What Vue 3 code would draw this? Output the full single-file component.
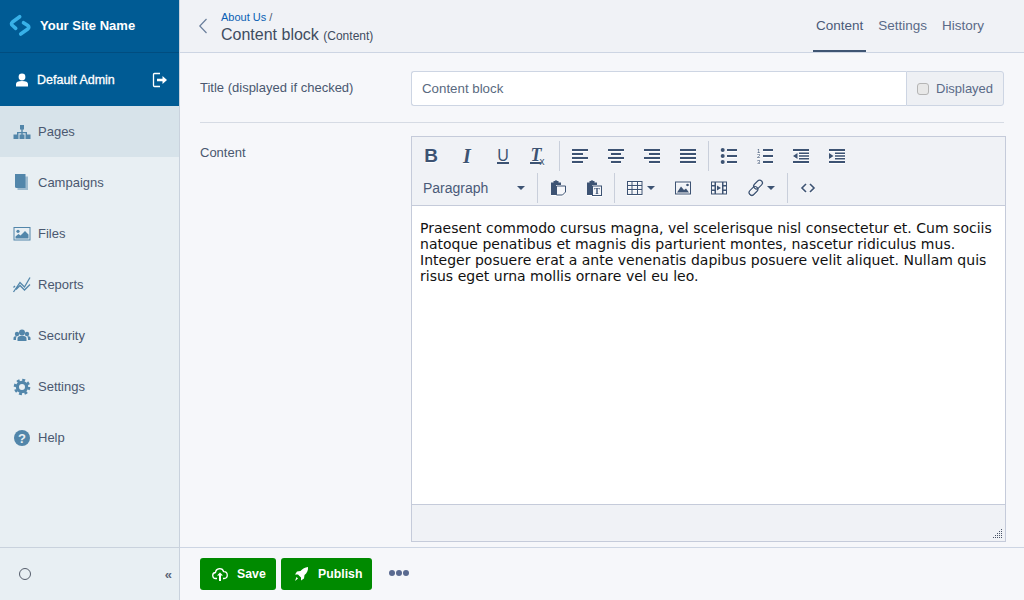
<script setup>
const nav = [
  { label: 'Pages', active: true, svg: `<path d="M8 0h4v4.500H8zM9.300 4.500h1.400V7H15v2.500h-1.400V8.300H10.700v1.200H9.300V8.300H6.400v1.200H5V7h4.300zM1.500 9.500h5v4.500h-5zM7.500 9.500h5v4.500h-5zM13.500 9.500h5v4.500h-5z" transform="translate(0 3)"/>` },
  { label: 'Campaigns', svg: `<path d="M5.500 3.500H16V17H5.500z" opacity=".5"/><path d="M3 1h10.500v14H4.500A1.500 1.500 0 0 1 3 13.500z"/>` },
  { label: 'Files', svg: `<path fill-rule="evenodd" d="M1.500 3h17v13.500h-17zM2.500 4v11.500h15V4z"/><circle cx="6" cy="7.300" r="1.600"/><path d="M3.500 14.500V12.500l3-2.500 2 1.500 4.500-4.500 3.500 3.500v4z"/>` },
  { label: 'Reports', svg: `<path fill="none" stroke="currentColor" stroke-width="1.300" d="M1.500 17 8 7.500l4.500 4.500L18 2.500M1.500 12.500 3 11M4 14.500l4-4 4.500 4.500 5.500-5.500"/>` },
  { label: 'Security', svg: `<circle cx="10" cy="6.500" r="3"/><circle cx="5" cy="8" r="2.200"/><circle cx="15" cy="8" r="2.200"/><path d="M5.500 15v-2.500c0-2 1.500-2.800 4.500-2.800s4.500.8 4.500 2.800V15zM1.500 14v-2c0-1.300.8-1.800 2.800-1.800.3 0 .5 0 .6.100-.6.700-.9 1.500-.9 2.300V14zM18.500 14v-2c0-1.300-.8-1.800-2.800-1.800-.3 0-.5 0-.6.100.6.700.9 1.500.9 2.300V14z"/>` },
  { label: 'Settings', svg: `<circle cx="10" cy="10" r="4.600" fill="none" stroke="currentColor" stroke-width="3.200"/><circle cx="10" cy="10" r="7" fill="none" stroke="currentColor" stroke-width="2.600" stroke-dasharray="2.900 2.600"/>` },
  { label: 'Help', svg: `<circle cx="10" cy="10" r="8"/><text x="10" y="14.500" text-anchor="middle" font-family="Liberation Sans" font-weight="700" font-size="13" fill="#e8eff3">?</text>` },
]
const lines = (rows) => rows.map(([x, y, w]) => `M${x} ${y}h${w}v2h-${w}z`).join('')
const indentBars = 'M2 3h16v2H2zM8 6.500h10V8H8zM8 9.300h10v1.500H8zM8 12h10v1.500H8zM2 15h16v2H2z'
const align = {
  left: lines([[2, 3, 16], [2, 7, 11], [2, 11, 16], [2, 15, 11]]),
  center: lines([[2, 3, 16], [5, 7, 10], [2, 11, 16], [5, 15, 10]]),
  right: lines([[2, 3, 16], [7, 7, 11], [2, 11, 16], [7, 15, 11]]),
  justify: lines([[2, 3, 16], [2, 7, 16], [2, 11, 16], [2, 15, 16]]),
}
const row1b = [
  { svg: `<path d="${align.left}"/>` },
  { svg: `<path d="${align.center}"/>` },
  { svg: `<path d="${align.right}"/>` },
  { svg: `<path d="${align.justify}"/>` },
]
const row1c = [
  { svg: `<circle cx="3.700" cy="4" r="2"/><circle cx="3.700" cy="10" r="2"/><circle cx="3.700" cy="16" r="2"/><path d="${lines([[8, 3, 10], [8, 9, 10], [8, 15, 10]])}"/>` },
  { svg: `<text x="2" y="6.500" font-size="6" font-family="Liberation Sans">1</text><text x="2" y="12" font-size="6" font-family="Liberation Sans">2</text><text x="2" y="17.500" font-size="6" font-family="Liberation Sans">3</text><path d="${lines([[8, 3, 10], [8, 9, 10], [8, 15, 10]])}"/>` },
  { svg: `<path d="${indentBars}M6.500 7v6L2 10z"/>` },
  { svg: `<path d="${indentBars}M2 7v6l4.500-3z"/>` },
]
const clip = `M3 4.500h2.500V3h1.200a1.500 1.500 0 0 1 2.600 0h1.200v1.500H13V7H8v10H3z`
const tableSvg = `<path fill-rule="evenodd" d="M1 3h15.500v14H1zM2 4v3h3.500V4zM6.500 4v3H11V4zM12 4v3h3.500V4zM2 8v3h3.500V8zM6.500 8v3H11V8zM12 8v3h3.500V8zM2 12v4h3.500v-4zM6.500 12v4H11v-4zM12 12v4h3.500v-4z"/>`
const imgSvg = `<path fill-rule="evenodd" d="M2 3.500h16v13H2zM3 4.500v11h14v-11z"/><circle cx="14.500" cy="7" r="1.300"/><path d="M4 14.500l4-6 3 3.500 2-1.500 3 4z"/>`
const mediaSvg = `<path fill-rule="evenodd" d="M2 3.500h16v13H2zM3 4.500v2.500h2.500V4.500zM14.500 4.500v2.500H17V4.500zM3 8.500v3h2.500v-3zM14.500 8.500v3H17v-3zM3 13v2.500h2.500V13zM14.500 13v2.500H17V13zM7 4.500v11h6v-11z"/><path d="M8 7.500l4 2.500-4 2.500z"/>`
const linkSvg = `<g fill="none" stroke="currentColor" stroke-width="1.200" stroke-linecap="round"><rect x="9.300" y="1.500" width="5.500" height="10" rx="2.700" transform="rotate(45 12 6.500)"/><rect x="4.700" y="8" width="5.500" height="10" rx="2.700" transform="rotate(45 7.500 13)"/></g>`
const codeSvg = `<path fill="none" stroke="currentColor" stroke-width="1.600" d="M8 6l-4 4 4 4M12 6l4 4-4 4"/>`
</script>

<template>
  <div class="app">
    <aside class="side">
      <div class="brand">
        <svg class="logo" width="26" height="26" viewBox="0 0 26 26">
          <path fill="none" stroke="#38b1e8" stroke-width="3.600" stroke-linecap="round" stroke-linejoin="round" d="M12.700 3.700 5.500 9Q3.500 10.800 5.500 12.500L8.700 15.300M13.700 21 20.800 16Q22.800 14 20.800 12.500L16.500 9.700"/>
        </svg>
        <span class="site">Your Site Name</span>
      </div>
      <div class="user">
        <svg class="uico" width="14" height="14" viewBox="0 0 14 14">
          <circle cx="7" cy="4" r="3.400" fill="#fff"/>
          <path d="M1 13.500V11c0-2 2-3 6-3s6 1 6 3v2.500z" fill="#fff"/>
        </svg>
        <span class="uname">Default Admin</span>
        <svg class="logout" width="16" height="16" viewBox="0 0 16 16">
          <path fill="none" stroke="#fff" stroke-width="1.300" d="M8 1.500H2.500a1 1 0 0 0-1 1v11a1 1 0 0 0 1 1H8"/>
          <path fill="#fff" d="M5 6.800h5.500V4l4.500 4-4.500 4V9.200H5z"/>
        </svg>
      </div>
      <nav class="nav">
        <a v-for="item in nav" :key="item.label" class="nav-item" :class="{ active: item.active }">
          <svg class="nav-ico" width="20" height="20" viewBox="0 0 20 20" v-html="item.svg"></svg>
          <span>{{ item.label }}</span>
        </a>
      </nav>
      <div class="side-foot">
        <span class="ring"></span>
        <span class="collapse">«</span>
      </div>
    </aside>

    <main class="main">
      <header class="top">
        <svg class="back" width="10" height="18" viewBox="0 0 10 18">
          <path fill="none" stroke="#6a7f9c" stroke-width="1.200" d="M8.500 2 1.800 9l6.700 7"/>
        </svg>
        <div class="crumbs">
          <div class="crumb"><a>About Us</a> /</div>
          <div class="title">Content block <small>(Content)</small></div>
        </div>
        <div class="tabs">
          <a class="tab on">Content</a>
          <a class="tab">Settings</a>
          <a class="tab">History</a>
        </div>
      </header>

      <section class="form">
        <div class="row first">
          <label class="lab">Title (displayed if checked)</label>
          <div class="group">
            <div class="input">Content block</div>
            <div class="addon"><span class="check"></span>Displayed</div>
          </div>
        </div>
        <hr class="rule" />
        <div class="row grow">
          <label class="lab lab2">Content</label>
          <div class="editor">
            <div class="toolbar">
              <div class="tbrow">
                <div class="tg">
                  <button class="b"><span class="g-b">B</span></button>
                  <button class="b"><span class="g-i">I</span></button>
                  <button class="b"><span class="g-u">U</span></button>
                  <button class="b"><span class="g-t">T<sub>x</sub></span></button>
                </div>
                <div class="tg sep">
                  <button v-for="(i, n) in row1b" :key="n" class="b"><svg width="20" height="20" viewBox="0 0 20 20" v-html="i.svg"></svg></button>
                </div>
                <div class="tg sep">
                  <button v-for="(i, n) in row1c" :key="n" class="b"><svg width="20" height="20" viewBox="0 0 20 20" v-html="i.svg"></svg></button>
                </div>
              </div>
              <div class="tbrow">
                <div class="fmt"><span>Paragraph</span><i class="caret"></i></div>
                <div class="tg sep">
                  <button class="b">
                    <svg width="20" height="20" viewBox="0 0 20 20">
                      <path :d="clip" />
                      <path d="M8.500 8h9v6l-3 3h-6z" fill="#f6f7fa" stroke="currentColor" />
                    </svg>
                  </button>
                  <button class="b">
                    <svg width="20" height="20" viewBox="0 0 20 20">
                      <path :d="clip" />
                      <rect x="8.500" y="8" width="9" height="9.500" fill="#f6f7fa" stroke="currentColor" />
                      <text x="13" y="16" text-anchor="middle" font-family="Liberation Serif" font-weight="700" font-size="9">T</text>
                    </svg>
                  </button>
                </div>
                <div class="tg sep">
                  <button class="b wide"><svg width="20" height="20" viewBox="0 0 20 20" v-html="tableSvg"></svg><i class="caret small"></i></button>
                  <button class="b"><svg width="20" height="20" viewBox="0 0 20 20" v-html="imgSvg"></svg></button>
                  <button class="b"><svg width="20" height="20" viewBox="0 0 20 20" v-html="mediaSvg"></svg></button>
                  <button class="b wide"><svg width="20" height="20" viewBox="0 0 20 20" v-html="linkSvg"></svg><i class="caret small"></i></button>
                </div>
                <div class="tg sep">
                  <button class="b"><svg width="20" height="20" viewBox="0 0 20 20" v-html="codeSvg"></svg></button>
                </div>
              </div>
            </div>
            <div class="body">Praesent commodo cursus magna, vel scelerisque nisl consectetur et. Cum sociis natoque penatibus et magnis dis parturient montes, nascetur ridiculus mus. Integer posuere erat a ante venenatis dapibus posuere velit aliquet. Nullam quis risus eget urna mollis ornare vel eu leo.</div>
            <div class="status">
              <svg width="10" height="10" viewBox="0 0 10 10">
                <path fill="#4a5568" d="M8 0h1v1H8zM8 2h1v1H8zM6 2h1v1H6zM8 4h1v1H8zM6 4h1v1H6zM4 4h1v1H4zM8 6h1v1H8zM6 6h1v1H6zM4 6h1v1H4zM2 6h1v1H2zM8 8h1v1H8zM6 8h1v1H6zM4 8h1v1H4zM2 8h1v1H2zM0 8h1v1H0z" />
              </svg>
            </div>
          </div>
        </div>
      </section>

      <footer class="foot">
        <button class="go">
          <svg width="16" height="16" viewBox="0 0 16 16">
            <path fill="none" stroke="#fff" stroke-width="1.300" d="M5 12.500H4a3 3 0 0 1-.5-6 4.200 4.200 0 0 1 8.200-.8 3.400 3.400 0 0 1 .3 6.800h-1" />
            <path fill="#fff" d="M8 6.500l3 3H9v5.500H7V9.500H5z" />
          </svg>
          Save
        </button>
        <button class="go pub">
          <svg width="16" height="16" viewBox="0 0 16 16">
            <path fill="#fff" d="M15 1c.3 3.500-1 6-3.500 8l-.5 3.500-3 2v-3l-3-3H2l2-3 3.500-.5C9.500 3 12 1.200 15 1zM3.500 11l1.500 1.500L2 15z" />
          </svg>
          Publish
        </button>
        <span class="dots"><i></i><i></i><i></i></span>
      </footer>
    </main>
  </div>
</template>

<style scoped>
.app { display: flex; width: 1024px; height: 600px; overflow: hidden; font-family: "Liberation Sans", Arial, sans-serif; font-size: 13px; color: #4a5870; background: #f6f7fa; }

.side { width: 180px; flex: none; display: flex; flex-direction: column; background: #e8eff3; border-right: 1px solid #c9d2dd; box-sizing: border-box; }
.brand { height: 53px; box-sizing: border-box; display: flex; align-items: center; padding-left: 7px; background: #005b94; border-bottom: 1px solid #004d80; }
.logo { flex: none; }
.site { margin-left: 7px; color: #fff; font-weight: 700; font-size: 13px; margin-bottom: 2px; }
.user { height: 53px; display: flex; align-items: center; padding: 0 11px 0 15px; background: #005b94; color: #fff; }
.uname { margin-left: 8px; font-size: 12.500px; -webkit-text-stroke: .3px #fff; flex: 1; }
.nav { flex: 1; display: flex; flex-direction: column; }
.nav-item { height: 51px; display: flex; align-items: center; padding-left: 12px; color: #4a5870; }
.nav-item.active { background: #d7e3ea; }
.nav-ico { fill: #5286aa; color: #5286aa; flex: none; margin-right: 6px; }
.side-foot { height: 53px; box-sizing: border-box; border-top: 1px solid #c9d2dd; display: flex; align-items: center; justify-content: space-between; padding: 0 7px 0 19px; }
.ring { width: 12px; height: 12px; box-sizing: border-box; border: 1.500px solid #555d6b; border-radius: 50%; }
.collapse { font-size: 13px; font-weight: 700; color: #5a6578; }

.main { flex: 1; min-width: 0; display: flex; flex-direction: column; }
.top { height: 53px; flex: none; box-sizing: border-box; display: flex; align-items: center; padding: 0 37px 0 18px; background: #f0f2f6; border-bottom: 1px solid #cdd5e3; }
.back { flex: none; margin-right: 13px; }
.crumbs { flex: 1; padding-top: 3px; }
.crumb { font-size: 11px; line-height: 14px; color: #4a5870; }
.crumb a { color: #0a5fb4; }
.title { font-size: 16px; line-height: 20px; color: #3f4c60; margin-top: 1px; }
.title small { font-size: 12px; }
.tabs { display: flex; align-self: stretch; gap: 9px; }
.tab { position: relative; padding: 0 3px 2px; box-sizing: border-box; display: flex; align-items: center; color: #5a6a88; height: 52px; font-size: 13.500px; }
.tab.on { color: #4a5a78; }
.tab.on::after { content: ""; position: absolute; left: 0; right: 0; bottom: 0; height: 2px; background: #3f5573; }

.form { flex: 1; min-height: 0; display: flex; flex-direction: column; padding: 18px 18px 5px 20px; }
.row { display: flex; }
.grow { flex: 1; min-height: 0; }
.lab { width: 211px; flex: none; color: #4a5870; line-height: 33px; height: 35px; }
.lab2 { line-height: 16px; height: auto; margin-top: 9px; }
.group { flex: 1; display: flex; height: 35px; margin-right: 2px; }
.input { flex: 1; box-sizing: border-box; background: #fff; border: 1px solid #cdd5e3; border-right: 0; border-radius: 3px 0 0 3px; padding: 0 10px; line-height: 33px; color: #5a6a80; font-size: 13.300px; }
.addon { width: 98px; box-sizing: border-box; flex: none; display: flex; align-items: center; background: #eef0f4; border: 1px solid #cdd5e3; border-radius: 0 3px 3px 0; padding-left: 10px; color: #5a6a88; }
.check { width: 12px; height: 12px; box-sizing: border-box; background: #e8e8e8; border: 1px solid #b5b5b5; border-radius: 3px; margin-right: 7px; }
.rule { border: 0; border-top: 1px solid #d6dbe4; margin: 16px 0 13px; width: 804px; }

.editor { flex: 1; min-width: 0; display: flex; flex-direction: column; border: 1px solid #c5cbda; background: #f0f2f6; }
.toolbar { padding: 3px 0 1px 1px; border-bottom: 1px solid #c5cbda; color: #3d5373; }
.tbrow { display: flex; height: 32px; }
.tg { display: flex; padding-right: 2px; }
.tg.sep { position: relative; padding-left: 3px; }
.tg.sep::before { content: ""; position: absolute; left: 0; top: 1px; bottom: 1px; width: 1px; background: #c9cfdb; }
.b { width: 36px; height: 32px; padding: 0; border: 0; background: none; color: inherit; display: flex; align-items: center; justify-content: center; fill: currentColor; }
.b svg { flex: none; filter: drop-shadow(0 1px 0 #fff); }
.b > span { text-shadow: 0 1px 0 #fff; }
.b.wide { width: 48px; justify-content: flex-start; padding-left: 9px; }
.g-b { font: 700 19px "Liberation Sans", sans-serif; }
.g-i { font: italic 700 20px "Liberation Serif", serif; }
.g-u { font: 400 16px/13px "Liberation Sans", sans-serif; border-bottom: 2px solid currentColor; }
.g-t { font: italic 700 18px/13px "Liberation Serif", serif; border-bottom: 2px solid currentColor; position: relative; left: -3px; padding: 0 1px; }
.g-t sub { font: 400 10px "Liberation Sans", sans-serif; position: absolute; left: 10px; bottom: -5px; }
.fmt { width: 124px; flex: none; display: flex; align-items: center; padding: 0 12px 0 10px; box-sizing: border-box; justify-content: space-between; color: #4a5a78; font-size: 14px; }
.caret { width: 0; height: 0; border: 4px solid transparent; border-top-color: #3d5373; border-bottom: 0; flex: none; }
.caret.small { margin-left: 1px; }
.body { flex: 1; min-height: 0; background: #fff; border-bottom: 1px solid #c5cbda; padding: 14px 8px 0; font: 14px/16px "DejaVu Sans", Verdana, sans-serif; letter-spacing: .012px; color: #111; }
.status { height: 36px; box-sizing: border-box; flex: none; display: flex; align-items: flex-end; justify-content: flex-end; padding: 0 2px 2px 0; }

.foot { height: 53px; flex: none; box-sizing: border-box; border-top: 1px solid #cdd5e3; display: flex; align-items: center; padding-left: 20px; gap: 5px; }
.go { height: 32px; width: 76px; display: flex; align-items: center; padding: 0 0 0 12px; gap: 9px; border: 0; border-radius: 3px; background: #008a00; color: #fff; font: 700 12.300px "Liberation Sans", sans-serif; }
.go.pub { width: 91px; gap: 9px; }
.dots { display: flex; gap: 1px; margin: 0 0 2px 12px; }
.dots i { width: 6px; height: 6px; border-radius: 50%; background: #5a6a90; }
</style>
